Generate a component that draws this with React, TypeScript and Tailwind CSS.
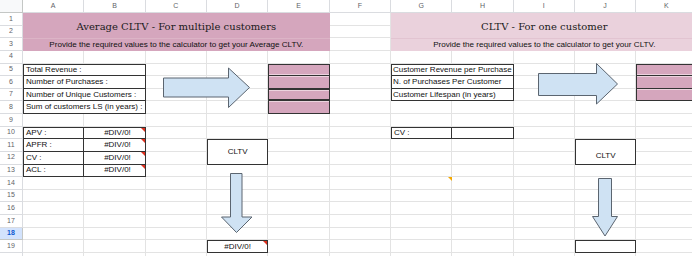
import React from 'react';

const COLS = ['A', 'B', 'C', 'D', 'E', 'F', 'G', 'H', 'I', 'J', 'K'];
const ROWS = Array.from({ length: 20 }, (_, i) => i + 1);

const ErrorMark = ({ color = 'border-t-[#e0311f]' }: { color?: string }) => (
  <span
    className={`absolute top-0 right-0 w-0 h-0 border-l-[4px] border-l-transparent border-t-[4px] ${color}`}
  />
);

const App: React.FC = () => {
  return (
    <div className="w-[692px] h-[256px] overflow-hidden bg-white font-['Liberation_Sans',Arial,sans-serif] text-[#111]">
      <div className="relative grid grid-cols-[23px_repeat(11,61.33px)] grid-rows-[13px_repeat(20,12.63px)] w-max">
        {/* column headers */}
        <div
          style={{ gridRow: 1, gridColumn: 1 }}
          className="bg-[#f8f9fa] border-r border-b border-[#c4c7c5]"
        />
        {COLS.map((c, i) => (
          <div
            key={c}
            style={{ gridRow: 1, gridColumn: i + 2 }}
            className="flex items-center justify-center bg-white border-r border-b border-[#dadce0] text-[7px] text-[#5f6368]"
          >
            {c}
          </div>
        ))}

        {/* row numbers + gridlines */}
        {ROWS.map((r) => (
          <React.Fragment key={r}>
            <div
              style={{ gridRow: r + 1, gridColumn: 1 }}
              className={
                r === 18
                  ? 'flex items-center justify-center bg-[#d3e3fd] border-r border-b border-[#c4c7c5] text-[7px] font-bold text-[#0b57d0]'
                  : 'flex items-center justify-center bg-white border-r border-b border-[#dadce0] text-[7px] text-[#5f6368]'
              }
            >
              {r < 20 ? r : ''}
            </div>
            {COLS.map((c, i) => (
              <div
                key={c}
                style={{ gridRow: r + 1, gridColumn: i + 2 }}
                className="border-r border-b border-[#e3e3e3]"
              />
            ))}
          </React.Fragment>
        ))}

        {/* left header */}
        <div className="col-start-2 col-span-5 row-start-2 row-span-2 flex items-center justify-center bg-[#d5a6bd] font-['DejaVu_Serif',serif] text-[10px] text-[#1a1a1a] pt-[2px]">
          Average CLTV - For multiple customers
        </div>
        <div className="col-start-2 col-span-5 row-start-4 flex items-center justify-center bg-[#d5a6bd] border-t border-[#dcb4c6] text-[8.1px]">
          Provide the required values to the calculator to get your Average CLTV.
        </div>

        {/* right header */}
        <div className="col-start-8 col-span-5 row-start-2 row-span-2 flex items-center justify-center bg-[#ead1dc] font-['DejaVu_Serif',serif] text-[10px] text-[#1a1a1a] pt-[2px]">
          CLTV - For one customer
        </div>
        <div className="col-start-8 col-span-5 row-start-4 flex items-center justify-center bg-[#ead1dc] border-t border-[#e2c4d1] text-[8.1px]">
          Provide the required values to the calculator to get your CLTV.
        </div>

        {/* left inputs */}
        <div className="col-start-2 col-span-2 row-start-6 flex items-center bg-white border border-[#333] pl-[2px] text-[8px]">
          Total Revenue :
        </div>
        <div className="col-start-2 col-span-2 row-start-7 flex items-center bg-white border-x border-b border-[#333] pl-[2px] text-[8px]">
          Number of Purchases :
        </div>
        <div className="col-start-2 col-span-2 row-start-8 flex items-center bg-white border-x border-b border-[#333] pl-[2px] text-[8px]">
          Number of Unique Customers :
        </div>
        <div className="col-start-2 col-span-2 row-start-9 flex items-center bg-white border-x border-b border-[#333] pl-[2px] text-[8px] whitespace-nowrap">
          Sum of customers LS (in years) :
        </div>

        <div className="col-start-6 row-start-6 bg-[#d5a6bd] border border-[#333] shadow-[inset_0_-1px_0_#ecd3de]" />
        <div className="col-start-6 row-start-7 bg-[#d5a6bd] border-x border-b border-[#333] shadow-[inset_0_1px_0_#ecd3de]" />
        <div className="col-start-6 row-start-8 bg-[#d5a6bd] border-x border-y-2 border-[#333] -mt-px shadow-[inset_0_1px_0_#ecd3de]" />
        <div className="col-start-6 row-start-9 bg-[#d5a6bd] border-x border-b border-[#333] shadow-[inset_0_1px_0_#ecd3de]" />

        {/* left results */}
        {[
          ['APV :', 'row-start-11', 'border'],
          ['APFR :', 'row-start-12', 'border-x border-b'],
          ['CV :', 'row-start-13', 'border-x border-b'],
          ['ACL :', 'row-start-14', 'border-x border-b'],
        ].map(([label, row, b]) => (
          <React.Fragment key={label}>
            <div className={`col-start-2 ${row} ${b} border-[#333] flex items-center bg-white pl-[2px] text-[8px]`}>
              {label}
            </div>
            <div className={`col-start-3 ${row} ${b} border-l-0 border-[#333] relative flex items-center justify-center bg-white text-[8px] pl-[6px]`}>
              #DIV/0!
              <ErrorMark />
            </div>
          </React.Fragment>
        ))}

        <div className="col-start-5 row-start-12 row-span-2 flex items-center justify-center bg-white border border-[#333] text-[8px]">
          CLTV
        </div>
        <div className="col-start-5 row-start-20 relative flex items-center justify-center bg-white border border-[#333] text-[8px]">
          #DIV/0!
          <ErrorMark />
        </div>

        {/* right inputs */}
        <div className="col-start-8 col-span-2 row-start-6 flex items-center bg-white border border-[#333] pl-[1px] text-[8px] whitespace-nowrap">
          Customer Revenue per Purchase
        </div>
        <div className="col-start-8 col-span-2 row-start-7 flex items-center bg-white border-x border-b border-[#333] pl-[1px] text-[8px]">
          N. of Purchases Per Customer
        </div>
        <div className="col-start-8 col-span-2 row-start-8 flex items-center bg-white border-x border-b border-[#333] pl-[1px] text-[8px]">
          Customer Lifespan (in years)
        </div>

        <div className="col-start-12 row-start-6 bg-[#d5a6bd] border border-[#333] shadow-[inset_0_-1px_0_#ecd3de]" />
        <div className="col-start-12 row-start-7 bg-[#d5a6bd] border-x border-b border-[#333] shadow-[inset_0_1px_0_#ecd3de]" />
        <div className="col-start-12 row-start-8 bg-[#d5a6bd] border-x border-b border-[#333] shadow-[inset_0_1px_0_#ecd3de]" />

        <div className="col-start-8 row-start-11 flex items-center bg-white border border-[#333] pl-[2px] text-[8px]">
          CV :
        </div>
        <div className="col-start-9 row-start-11 bg-white border-y border-r border-[#333]" />

        <div className="col-start-8 row-start-15 relative">
          <ErrorMark color="border-t-[#f4a800]" />
        </div>

        <div className="col-start-11 row-start-12 row-span-2 flex items-end justify-center pb-[2px] bg-white border border-[#333] text-[8px]">
          CLTV
        </div>
        <div className="col-start-11 row-start-20 bg-white border border-[#333]" />

        {/* arrows */}
        <svg
          className="absolute left-0 top-0 pointer-events-none"
          width="692"
          height="256"
          viewBox="0 0 692 256"
        >
          <g fill="#cfe2f3" stroke="#5b6570" strokeWidth="1">
            <polygon points="163.5,78 228.5,78 228.5,68 249.5,87.5 228.5,107.5 228.5,97 163.5,97" />
            <polygon points="538.5,73.5 596.5,73.5 596.5,63.5 617.5,84 596.5,104 596.5,95.5 538.5,95.5" />
            <polygon points="230.5,173.5 242,173.5 242,217 252,217 236.5,232.5 221.5,217 230.5,217" />
            <polygon points="598.5,178.5 611.5,178.5 611.5,216.5 617.5,216.5 605,236 592.5,216.5 598.5,216.5" />
          </g>
        </svg>
      </div>
    </div>
  );
};

export default App;
